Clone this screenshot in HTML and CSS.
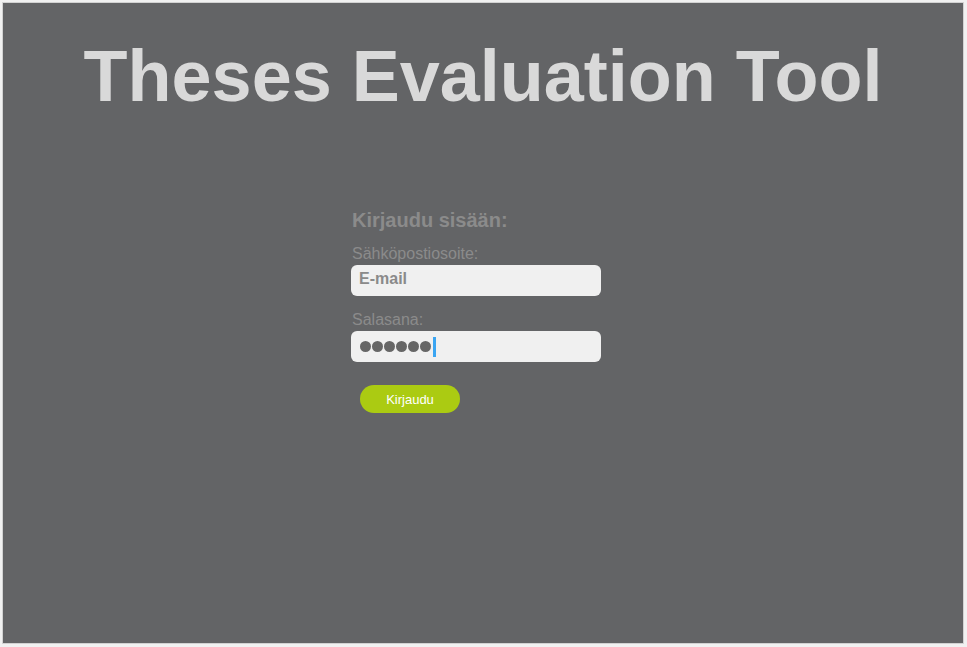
FILE: index.html
```html
<!DOCTYPE html>
<html lang="fi">
<head>
<meta charset="utf-8">
<title>Theses Evaluation Tool</title>
<link rel="stylesheet" href="styles.css">
</head>
<body>
<div class="panel">
  <h1 class="title">Theses Evaluation Tool</h1>
  <form class="login">
    <h2 class="login-heading">Kirjaudu sisään:</h2>
    <label class="field-label">Sähköpostiosoite:</label>
    <div class="field"><span class="placeholder">E-mail</span></div>
    <label class="field-label second">Salasana:</label>
    <div class="field">
      <span class="dots"><i></i><i></i><i></i><i></i><i></i><i></i></span><span class="caret"></span>
    </div>
    <button type="button" class="btn">Kirjaudu</button>
  </form>
</div>
</body>
</html>
```
FILE: styles.css
```css
html, body {
  margin: 0;
  padding: 0;
}
body {
  background: #f1f1f1;
  padding: 2px;
  font-family: "Liberation Sans", Arial, sans-serif;
}
.panel {
  width: 960px;
  height: 640px;
  background: #636466;
  border: 1px solid #d2d2d2;
  overflow: hidden;
}
.title {
  margin: 37px 0 0 0;
  font-size: 72px;
  line-height: 72px;
  font-weight: bold;
  color: #d9d9d9;
  text-align: center;
}
.login {
  margin: 96px 0 0 348px;
  width: 250px;
  display: flex;
  flex-direction: column;
}
.login-heading {
  margin: 0 0 13px 1px;
  font-size: 20px;
  line-height: 24px;
  font-weight: bold;
  color: #8b8b8b;
}
.field-label {
  font-size: 16px;
  line-height: 18px;
  color: #8b8b8b;
  margin: 0 0 2px 1px;
}
.field-label.second {
  margin-top: 15px;
}
.field {
  height: 31px;
  box-sizing: border-box;
  background: #f0f0f0;
  border-radius: 6px;
  display: flex;
  align-items: center;
  padding-left: 8px;
}
.placeholder {
  font-size: 16px;
  font-weight: bold;
  color: #8a8a8a;
  margin-top: -3px;
}
.dots {
  display: flex;
  gap: 1px;
  margin-left: 1px;
}
.dots i {
  display: block;
  width: 11px;
  height: 11px;
  border-radius: 50%;
  background: #666;
}
.caret {
  display: block;
  width: 3px;
  height: 20px;
  background: #3aa5f2;
  margin-left: 2px;
}
.btn {
  margin: 23px 0 0 9px;
  width: 100px;
  height: 28px;
  border: none;
  border-radius: 14px;
  background: #abcb12;
  color: #fff;
  font-family: "Liberation Sans", Arial, sans-serif;
  font-size: 13px;
  padding: 0;
  cursor: pointer;
}
```
